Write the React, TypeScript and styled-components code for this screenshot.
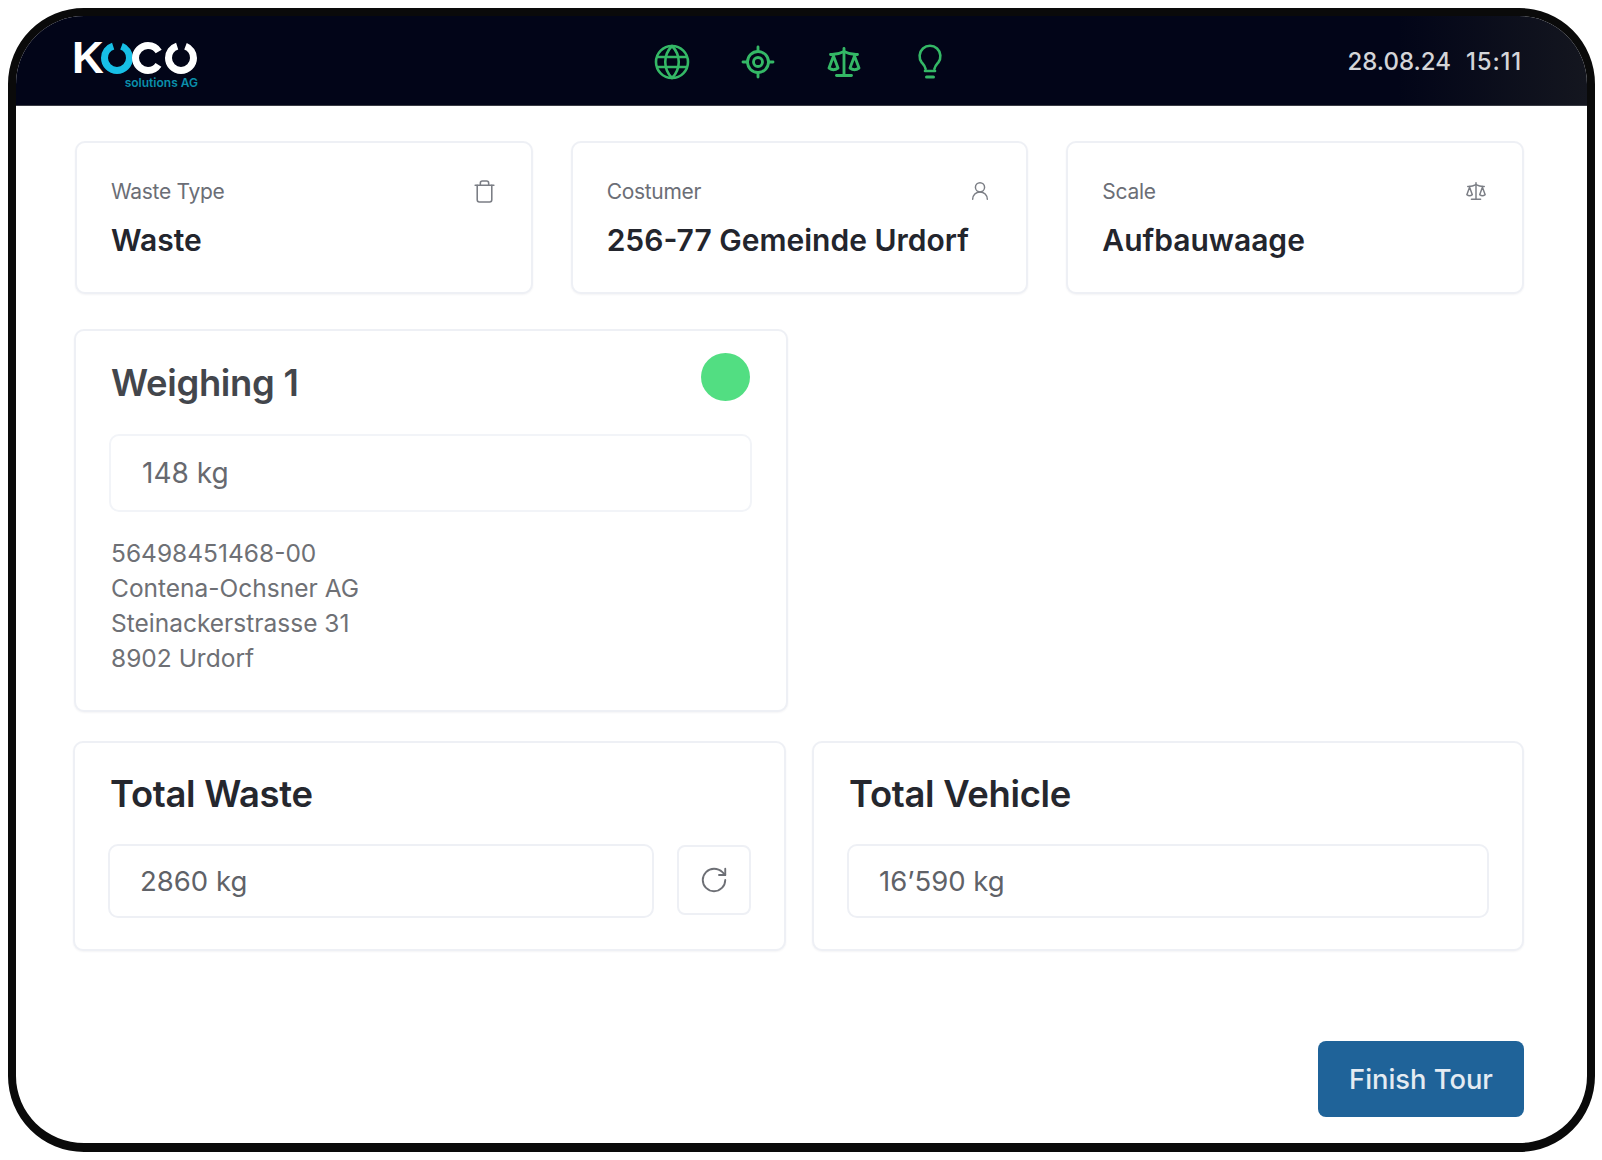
import React from "react";
import styled, { createGlobalStyle } from "styled-components";
import { Trash, UserRound, RotateCw, Scale, LocateFixed } from "lucide-react";

const Global = createGlobalStyle`
  html, body { margin: 0; padding: 0; background: #fff; }
  body { font-family: Inter, "Liberation Sans", sans-serif; }
  * { box-sizing: border-box; }
`;

const Page = styled.div`
  width: 1602px;
  height: 1160px;
  padding: 8px 7px 8px 8px;
`;
const Frame = styled.div`
  width: 100%;
  height: 100%;
  border: 8px solid #0a0a0a;
  border-bottom-width: 9px;
  border-radius: 76px;
  overflow: hidden;
  display: flex;
  flex-direction: column;
  background: #fff;
`;
const Header = styled.header`
  height: 90px;
  flex: none;
  display: grid;
  grid-template-columns: 1fr auto 1fr;
  align-items: center;
  padding: 0 65px 0 56px;
  background: linear-gradient(90deg, #020518 0%, #020518 88%, #14161f 100%);
  border-bottom: 1px solid #3a3c44;
`;
const Logo = styled.div`
  display: flex;
  flex-direction: column;
  align-items: flex-start;
  width: 126px;
  margin-top: 10px;
`;
const LogoMark = styled.div`
  display: flex;
  align-items: center;
  height: 32px;
`;
const LogoK = styled.span`
  font-family: "Liberation Sans", sans-serif;
  font-size: 44px;
  line-height: 32px;
  font-weight: 700;
  color: #fff;
  margin-right: -4px;
`;
const LogoSub = styled.span`
  align-self: flex-end;
  font-size: 12px;
  line-height: 12px;
  font-weight: 600;
  color: #0a8fab;
  margin-top: 3px;
  white-space: nowrap;
`;
const Nav = styled.nav`
  display: flex;
  gap: 50px;
  margin: 2px 0 0 7px;
  color: #34b866;
`;
const NavIcon = styled.span`
  width: 36px;
  height: 36px;
  display: flex;
  align-items: center;
  justify-content: center;
`;
const Clock = styled.div`
  justify-self: end;
  display: flex;
  gap: 15px;
  margin-top: 2px;
  font-size: 24px;
  font-weight: 500;
  color: #d4d5d8;
`;
const ClockTime = styled.span`
  letter-spacing: 0.8px;
`;
const Content = styled.main`
  flex: 1;
  display: flex;
  flex-direction: column;
  padding: 35px 63px 26px 58px;
`;
const InfoRow = styled.div`
  display: grid;
  grid-template-columns: repeat(3, 1fr);
  gap: 38px;
  margin-left: 1px;
`;
const Card = styled.section`
  background: #fff;
  border: 2px solid #eef0f5;
  border-radius: 10px;
  box-shadow: 0 1px 2px rgba(30, 40, 70, 0.05);
`;
const InfoCard = styled(Card)`
  height: 153px;
  padding: 33px 35px 0 34px;
`;
const InfoTop = styled.div`
  display: flex;
  align-items: center;
  justify-content: space-between;
  height: 30px;
  color: #7b7e85;
`;
const TrashIcon = styled(Trash)`
  margin-right: -1px;
`;
const InfoLabel = styled.span`
  font-size: 21px;
  letter-spacing: -0.3px;
  color: #6b6e76;
`;
const InfoValue = styled.div`
  margin-top: 14px;
  font-size: 30px;
  line-height: 40px;
  font-weight: 600;
  color: #23252d;
`;
const WeighCard = styled(Card)`
  width: 714px;
  height: 383px;
  margin-top: 35px;
  padding: 31px 34px 0 35px;
`;
const WeighHead = styled.div`
  display: flex;
  justify-content: space-between;
  align-items: flex-start;
  height: 72px;
`;
const CardTitle = styled.h2<{ $dark?: boolean }>`
  margin: 0;
  font-size: 36.400px;
  font-weight: 600;
  line-height: 42px;
  letter-spacing: -0.3px;
  color: ${(p) => (p.$dark ? "#25272e" : "#43464c")};
`;
const StatusDot = styled.span`
  width: 49px;
  height: 48px;
  margin: -9px 2px 0 0;
  border-radius: 50%;
  background: #52de82;
`;
const ValueField = styled.div<{ $h: number }>`
  flex: 1;
  height: ${(p) => p.$h}px;
  margin-left: -2px;
  border: 2px solid #eef0f5;
  border-radius: 10px;
  display: flex;
  align-items: center;
  padding-left: 30px;
  font-size: 27.500px;
  color: #5f6268;
  background: #fff;
`;
const WeighField = styled(ValueField)`
  flex: none;
  padding-left: 31px;
  font-size: 28px;
  border-color: #f2f4f8;
  color: #67696f;
`;
const Address = styled.div`
  margin-top: 24px;
  font-size: 24.500px;
  line-height: 35px;
  color: #6e7075;
`;
const TotalsRow = styled.div`
  display: grid;
  grid-template-columns: 713px 712px;
  gap: 26px;
  margin: 29px 0 0 -1px;
`;
const TotalCard = styled(Card)`
  height: 210px;
  padding: 30px 33px 0 35px;
`;
const TotalBody = styled.div`
  display: flex;
  gap: 23px;
  margin-top: 29px;
`;
const IconButton = styled.button`
  width: 74px;
  height: 70px;
  flex: none;
  margin-top: 1px;
  border: 2px solid #eef0f5;
  border-radius: 8px;
  background: #fff;
  display: flex;
  align-items: center;
  justify-content: center;
  color: #6d6f75;
  padding: 0;
`;
const Footer = styled.div`
  margin-top: auto;
  display: flex;
  justify-content: flex-end;
`;
const FinishButton = styled.button`
  width: 206px;
  height: 76px;
  border: none;
  border-radius: 8px;
  background: #1f6399;
  color: #e4ebf2;
  font-family: inherit;
  font-size: 27.300px;
  font-weight: 500;
`;

const GlobeIcon = () => (
  <svg width="36" height="36" viewBox="0 0 36 36" fill="none" stroke="currentColor" strokeWidth="2.6" strokeLinecap="round">
    <circle cx="18" cy="18" r="16" />
    <path d="M3.2 13h29.6M3.2 23h29.6" />
    <path d="M18 2c-9 9-9 23 0 32M18 2c9 9 9 23 0 32" />
  </svg>
);
const BulbIcon = () => (
  <svg width="36" height="36" viewBox="0 0 36 36" fill="none" stroke="currentColor" strokeWidth="2.6" strokeLinecap="round">
    <path d="M13.6 25c-.6-3-2-4.400-3.800-6.400A10.400 10.400 0 1 1 26.200 18.600c-1.800 2-3.200 3.400-3.800 6.400" />
    <path d="M13 27h10" />
    <path d="M14.500 33h7" strokeWidth="3" />
  </svg>
);
const LogoRings = () => (
  <svg width="98" height="32" viewBox="0 0 98 32" fill="none" strokeWidth="7" aria-hidden="true">
    <circle cx="17" cy="16" r="12.500" stroke="#17bfe6" strokeDasharray="70 8.500" strokeDashoffset="-63.100" />
    <circle cx="48" cy="16" r="12.500" stroke="#fff" strokeDasharray="64 14.500" strokeDashoffset="-7.250" />
    <circle cx="81" cy="16" r="12.500" stroke="#fff" strokeDasharray="70 8.500" strokeDashoffset="-63.100" />
  </svg>
);

const infos = [
  { label: "Waste Type", value: "Waste", icon: <TrashIcon size={25} strokeWidth={1.5} /> },
  { label: "Costumer", value: "256-77 Gemeinde Urdorf", icon: <UserRound size={22} strokeWidth={1.6} /> },
  { label: "Scale", value: "Aufbauwaage", icon: <Scale size={22} strokeWidth={1.6} /> },
];

export default function App() {
  return (
    <Page>
      <Global />
      <Frame>
        <Header>
          <Logo>
            <LogoMark>
              <LogoK>K</LogoK>
              <LogoRings />
            </LogoMark>
            <LogoSub>solutions AG</LogoSub>
          </Logo>
          <Nav>
            <NavIcon><GlobeIcon /></NavIcon>
            <NavIcon><LocateFixed size={36} strokeWidth={1.9} /></NavIcon>
            <NavIcon><Scale size={36} strokeWidth={1.9} /></NavIcon>
            <NavIcon><BulbIcon /></NavIcon>
          </Nav>
          <Clock>
            <span>28.08.24</span>
            <ClockTime>15:11</ClockTime>
          </Clock>
        </Header>
        <Content>
          <InfoRow>
            {infos.map((i) => (
              <InfoCard key={i.label}>
                <InfoTop>
                  <InfoLabel>{i.label}</InfoLabel>
                  {i.icon}
                </InfoTop>
                <InfoValue>{i.value}</InfoValue>
              </InfoCard>
            ))}
          </InfoRow>
          <WeighCard>
            <WeighHead>
              <CardTitle>Weighing 1</CardTitle>
              <StatusDot />
            </WeighHead>
            <WeighField $h={78}>148 kg</WeighField>
            <Address>
              <div>56498451468-00</div>
              <div>Contena-Ochsner AG</div>
              <div>Steinackerstrasse 31</div>
              <div>8902 Urdorf</div>
            </Address>
          </WeighCard>
          <TotalsRow>
            <TotalCard>
              <CardTitle $dark>Total Waste</CardTitle>
              <TotalBody>
                <ValueField $h={74}>2860 kg</ValueField>
                <IconButton><RotateCw size={30} strokeWidth={1.5} /></IconButton>
              </TotalBody>
            </TotalCard>
            <TotalCard>
              <CardTitle $dark>Total Vehicle</CardTitle>
              <TotalBody>
                <ValueField $h={74}>16’590 kg</ValueField>
              </TotalBody>
            </TotalCard>
          </TotalsRow>
          <Footer>
            <FinishButton>Finish Tour</FinishButton>
          </Footer>
        </Content>
      </Frame>
    </Page>
  );
}
